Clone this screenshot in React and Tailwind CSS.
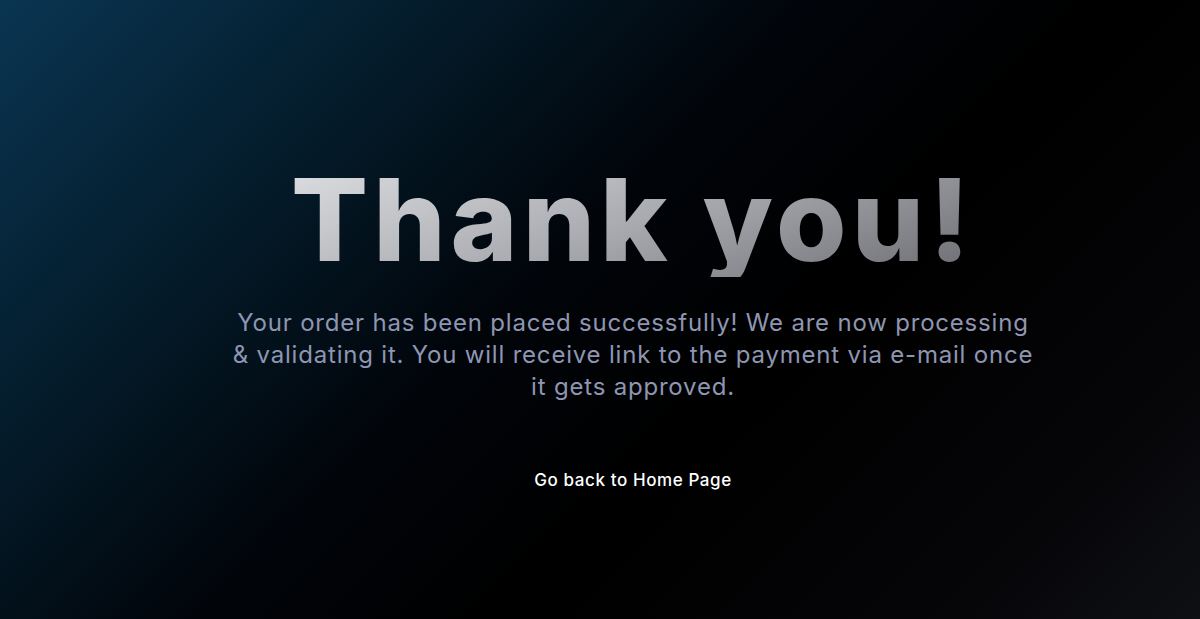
import React from 'react';

export default function App() {
    return (
        <main className="min-h-[619px] w-full bg-[linear-gradient(135deg,#0a3552_0%,#041e2e_22%,#010409_45%,#000000_62%,#050508_85%,#0f1014_100%)] flex flex-col items-center pl-[66px] pt-[163px] font-['Inter',sans-serif]">
            {/* TITULO */}
            <h1 className="text-[114px] leading-none font-extrabold tracking-[5px] bg-[linear-gradient(160deg,#dcdee1_0%,#a9abb0_50%,#6c6d72_100%)] bg-clip-text text-transparent">
                Thank you!
            </h1>

            <p className="mt-[30px] text-[24px] leading-[32px] tracking-[0.8px] text-center text-[#8e96b2]">
                Your order has been placed successfully! We are now processing<br />
                &amp; validating it. You will receive link to the payment via e-mail once<br />
                it gets approved.
            </p>

            <a href="#" className="mt-[65px] text-[17px] leading-6 font-medium tracking-[0.6px] text-white">
                Go back to Home Page
            </a>
        </main>
    );
}
